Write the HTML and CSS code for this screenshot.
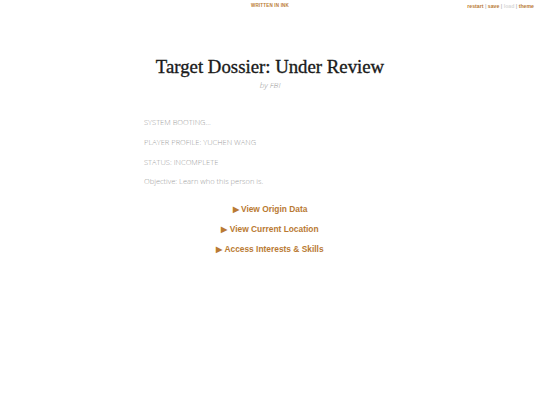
FILE: index.html
```html
<!DOCTYPE html>
<html lang="en">
  <head>
    <meta charset="UTF-8" />
    <meta name="viewport" content="width=device-width, initial-scale=1.0" />
    <title>Target Dossier: Under Review</title>
    <link rel="stylesheet" href="styles.css">
  </head>
  <body>
    <div class="controls">
      <a href="#">restart</a> | <a href="#">save</a> | <a href="#" class="disabled">load</a> | <a href="#">theme</a>
    </div>
    <div class="written-in-ink">WRITTEN IN INK</div>

    <div class="outerContainer">
      <div class="container">
        <div class="header">
          <h1>Target Dossier: Under Review</h1>
          <h2 class="byline">by FBI</h2>
        </div>

        <div class="story">
          <p>SYSTEM BOOTING...</p>
          <p>PLAYER PROFILE: YUCHEN WANG</p>
          <p>STATUS: INCOMPLETE</p>
          <p>Objective: Learn who this person is.</p>

          <div class="choices">
            <p class="choice"><a href="#">▶ View Origin Data</a></p>
            <p class="choice"><a href="#">▶ View Current Location</a></p>
            <p class="choice"><a href="#">▶ Access Interests &amp; Skills</a></p>
          </div>
        </div>
      </div>
    </div>
  </body>
</html>
```

FILE: styles.css
```css
body {
  margin: 0;
  background-color: white;
  font-family: "Open Sans", sans-serif;
  font-weight: 300;
}
a {
  text-decoration: none;
}
.controls {
  position: absolute;
  top: 3px;
  right: 6px;
  font-family: "Liberation Sans", sans-serif;
  font-size: 5.2px;
  font-weight: 700;
  color: #c0c0c0;
}
.controls a {
  color: #b97a33;
}
.controls a.disabled {
  color: #d8d8d8;
}
.written-in-ink {
  text-align: center;
  padding-top: 3px;
  font-family: "Liberation Sans", sans-serif;
  font-size: 4.5px;
  font-weight: 700;
  letter-spacing: 0.2px;
  color: #b97a33;
}
.outerContainer {
  display: flex;
  justify-content: center;
}
.container {
  width: 252px;
  padding-top: 47px;
}
.header {
  text-align: center;
  padding-bottom: 26px;
}
h1 {
  margin: 0;
  font-family: "Liberation Serif", serif;
  font-weight: 400;
  font-size: 18.8px;
  -webkit-text-stroke: 0.35px #1a1a1a;
  color: #1a1a1a;
  line-height: 24px;
}
.byline {
  margin: 0;
  font-family: "Open Sans", sans-serif;
  font-style: italic;
  font-weight: 300;
  font-size: 8px;
  color: #999;
  line-height: 12px;
}
.story p {
  margin: 0 0 8.8px;
  font-size: 7.5px;
  line-height: 11px;
  color: #a0a0a0;
}
.choices {
  padding-top: 8px;
}
.story p.choice {
  text-align: center;
  margin-bottom: 8.7px;
  font-family: "Liberation Sans", sans-serif;
  font-weight: 700;
  font-size: 8.4px;
}
.choice a {
  color: #b97a33;
}
```
